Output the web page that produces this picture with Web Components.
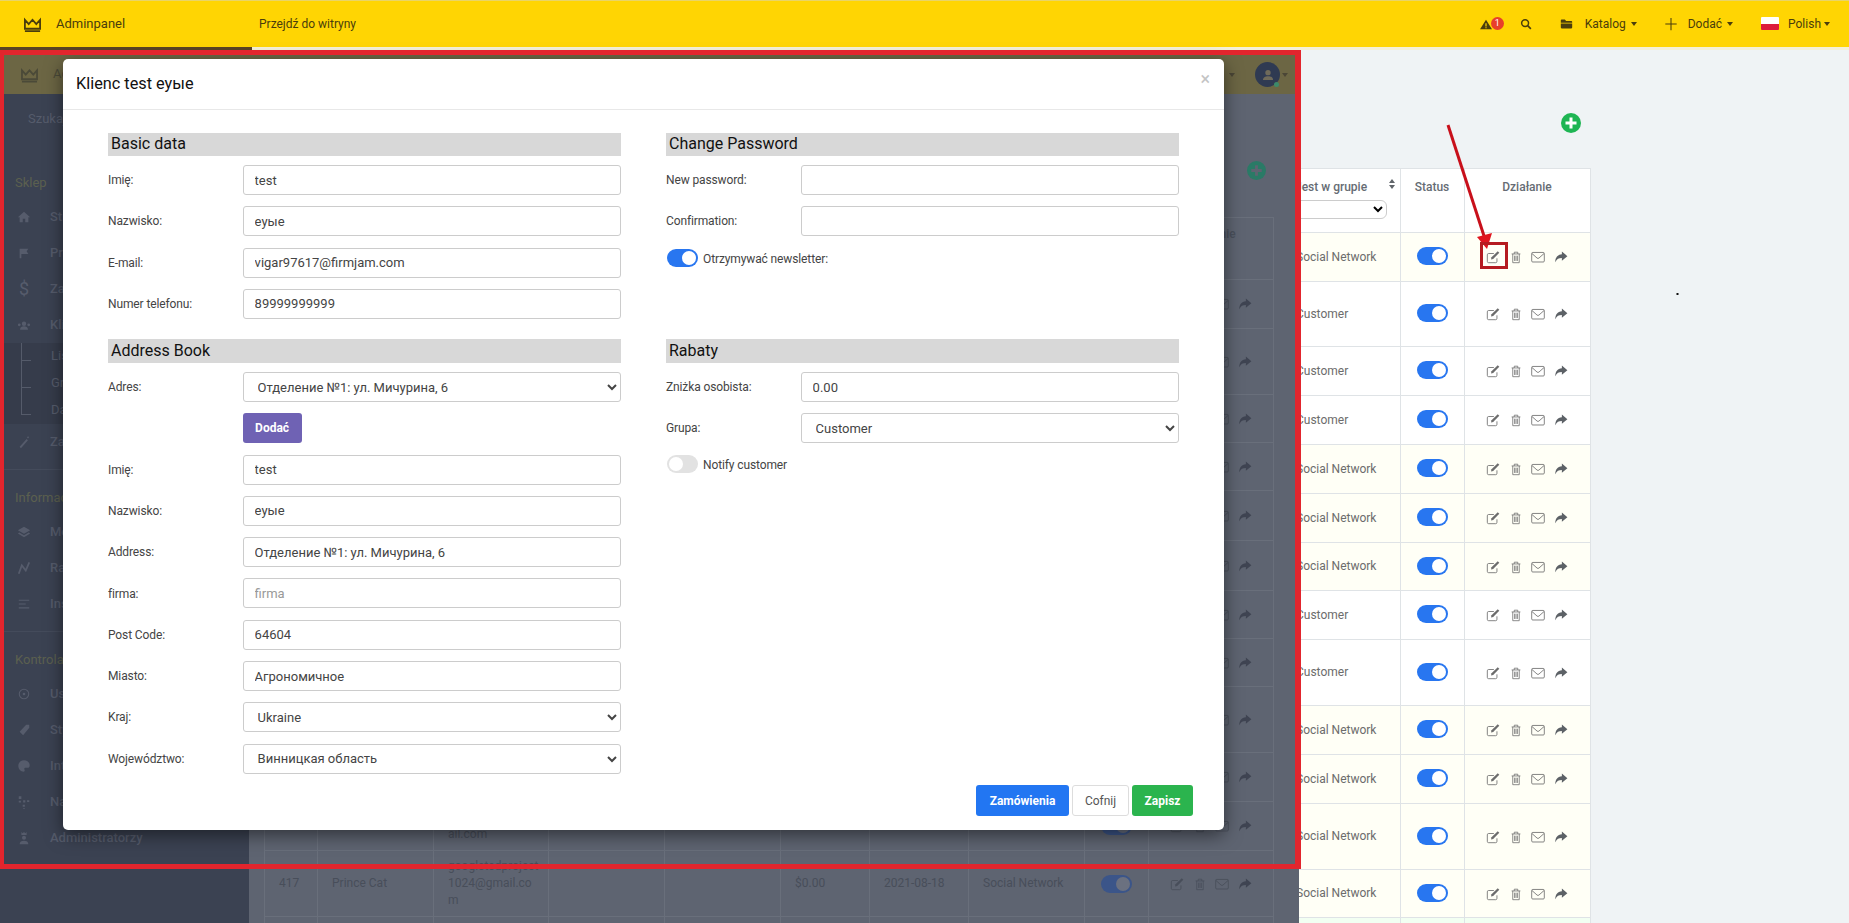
<!DOCTYPE html>
<html lang="pl">
<head>
<meta charset="utf-8">
<title>Adminpanel</title>
<style>
  html, body { margin: 0; height: 100%; overflow: hidden; }
  body { font: 12px/1.4 Roboto, "Noto Sans", sans-serif; background: #eff3f5; }
</style>
</head>
<body>
<admin-app></admin-app>

<script>
const ICONS = {
  crown: '<path d="M2 3.5 6 8l4-4.5L14 8l4-4.5V13H2Z M2 15.5h16" fill="none" stroke="currentColor" stroke-width="1.9"/>',
  search: '<circle cx="6.8" cy="6.8" r="4.6" fill="none" stroke="currentColor" stroke-width="2"/><path d="m10.2 10.2 4.3 4.3" stroke="currentColor" stroke-width="2.2"/>',
  folder: '<path d="M1 4a1 1 0 0 1 1-1h4l1.5 2H14a1 1 0 0 1 1 1v1H1Z M1 8h14v5a1 1 0 0 1-1 1H2a1 1 0 0 1-1-1Z" fill="currentColor"/>',
  plus: '<path d="M8 1v14M1.5 8h13" stroke="currentColor" stroke-width="1.2" fill="none"/>',
  edit: '<path d="M12.5 9.5V13a1.5 1.5 0 0 1-1.5 1.5H3A1.5 1.5 0 0 1 1.5 13V5.5A1.5 1.5 0 0 1 3 4h6" fill="none" stroke="currentColor" stroke-width=".95"/><path d="M13.4 1.4 15.2 3.2 8.2 10.2 5.7 10.8 6.3 8.4Z" fill="currentColor"/>',
  trash: '<path d="M3 4.5h10M6 4.5v-2h4v2M4.3 4.5v10h7.4v-10M6.4 6.5v6M8 6.5v6M9.6 6.5v6" fill="none" stroke="currentColor" stroke-width=".9"/>',
  mail: '<rect x=".8" y="2.800" width="14.400" height="10.900" rx="1.200" fill="none" stroke="currentColor" stroke-width=".95"/><path d="m1.100 4 5.800 5.200a1.700 1.700 0 0 0 2.200 0L14.900 4" fill="none" stroke="currentColor" stroke-width=".95"/>',
  share: '<path d="M9 1.8 15.3 7 9 12.2V9.2C5.5 9.2 3 10.2 1.5 14 1.3 9 4 5.2 9 4.9Z" fill="currentColor"/>',
  home: '<path d="M8 2 1 8.2h2V14h3.6v-4h2.8v4H13V8.2h2Z" fill="currentColor"/>',
  flag: '<path d="M3 3h10l-2 3 2 3H5v5H3Z" fill="currentColor"/>',
  users: '<path d="M8 4a2.5 2.5 0 1 1 0 5 2.5 2.5 0 0 1 0-5ZM3.5 13.5C3.5 10.5 5.5 9.5 8 9.5s4.5 1 4.5 4ZM2.6 6.2a1.6 1.6 0 1 1 0 3.2 1.6 1.6 0 0 1 0-3.2ZM13.4 6.2a1.6 1.6 0 1 1 0 3.2 1.6 1.6 0 0 1 0-3.2Z" fill="currentColor"/>',
  wand: '<path d="M3 13.5 11 4.5 12.5 6 4.5 15ZM12.6 1.5l1.2 1.2-1.2 1.2-1.2-1.2Z" fill="currentColor"/>',
  layers: '<path d="M8 2 15 6 8 10 1 6ZM2.6 8.7 8 11.8l5.4-3.1 1.6 1L8 14 1 9.7Z" fill="currentColor"/>',
  chart: '<path d="M2 14.5 5.5 5l4.5 6L14 1.5" fill="none" stroke="currentColor" stroke-width="2"/>',
  list: '<path d="M2 3h12v1.4H2ZM2 7.3h8v1.4H2ZM2 11.6h12V13H2Z" fill="currentColor"/>',
  gear: '<path fill-rule="evenodd" d="M8 2a6 6 0 1 0 0 12A6 6 0 0 0 8 2Zm0 1.2a4.8 4.8 0 1 1 0 9.6 4.8 4.8 0 0 1 0-9.6ZM8 6.5a1.5 1.5 0 1 0 0 3 1.5 1.5 0 0 0 0-3Z" fill="currentColor"/>',
  tag: '<path d="M10.5 2H14v3.5L7 14l-4-4Z" fill="currentColor"/>',
  palette: '<path d="M8 1.5C4 1.5 1.5 4.5 1.5 8S4.500 14.500 7.500 14.500C9 14.500 9 13 8.500 12S8.500 10 10 10h2c1.500 0 2.500-1 2.500-3C14.500 4 11.500 1.500 8 1.500Z" fill="currentColor"/>',
  sitemap: '<path d="M2 1.500h3v3H2ZM7 6h2.500v2.500H7ZM11.500 6h2.500v2H11.500ZM2 6.500h2.500v2H2ZM6.500 11H9v2.500H6.500ZM7 15h2v1H7Z" fill="currentColor"/>',
  admin: '<path d="M5 1l1.500 1.500L8 1l1.500 1.500L11 1v3.500H5ZM8 5.500a2.300 2.300 0 1 1 0 4.600 2.300 2.300 0 0 1 0-4.600ZM3 15c0-2.800 2-4 5-4s5 1.200 5 4Z" fill="currentColor"/>',
  user: '<path d="M8 3.500a2.400 2.400 0 1 1 0 4.800 2.400 2.400 0 0 1 0-4.800ZM3.500 12.500C3.500 10 5.500 9 8 9s4.500 1 4.500 3.500Z" fill="currentColor"/>'
};

class UiIcon extends HTMLElement {
  connectedCallback() {
    const vb = this.getAttribute('name') === 'crown' ? '0 0 20 17' : '0 0 16 16';
    this.attachShadow({ mode: 'open' }).innerHTML = `
      <style>
        :host { display: inline-flex; width: 13px; height: 13px; flex: none; }
        svg { width: 100%; height: 100%; display: block; }
      </style>
      <svg viewBox="${vb}" aria-hidden="true">${ICONS[this.getAttribute('name')] || ''}</svg>`;
  }
}

class ToggleSwitch extends HTMLElement {
  connectedCallback() {
    const on = this.hasAttribute('on');
    this.attachShadow({ mode: 'open' }).innerHTML = `
      <style>
        :host { display: inline-flex; flex: none; width: 31px; height: 18px; box-sizing: border-box; padding: 2px;
          border-radius: 9px; background: ${on ? 'var(--toggle-on, #2876f0)' : '#e2e2e2'};
          justify-content: ${on ? 'flex-end' : 'flex-start'}; }
        i { display: block; width: 14px; height: 14px; border-radius: 50%; background: var(--knob, #fff); }
      </style><i></i>`;
  }
}

class RowActions extends HTMLElement {
  connectedCallback() {
    this.attachShadow({ mode: 'open' }).innerHTML = `
      <style>
        :host { display: flex; justify-content: center; align-items: center; gap: 8.500px; }
        ui-icon { width: 14px; height: 14px; }
        ui-icon:last-child { color: var(--share, inherit); }
      </style>
      <ui-icon name="edit"></ui-icon><ui-icon name="trash"></ui-icon><ui-icon name="mail"></ui-icon><ui-icon name="share"></ui-icon>`;
  }
}

class AdminTopbar extends HTMLElement {
  connectedCallback() {
    this.attachShadow({ mode: 'open' }).innerHTML = `
      <style>
        :host { display: block; color: #4a3d0c; }
        .bar { height: 46px; border-top: 1px solid #e9d468; background: #ffd503; display: flex; align-items: center; }
        .brand { width: 252px; flex: none; box-sizing: border-box; padding-left: 23px; display: flex; align-items: center; gap: 14px; font-size: 13px; }
        .brand ui-icon { width: 19px; height: 17px; }
        .link { margin-left: 7px; }
        .right { margin-left: auto; padding-right: 19px; display: flex; align-items: center; }
        .caret { width: 0; height: 0; border: 3.500px solid transparent; border-top: 4px solid currentColor; border-bottom: 0; margin-left: 5px; }
        .alert { position: relative; width: 24px; height: 13px; margin-right: 16px; }
        .alert svg { width: 12px; height: 11px; display: block; margin-top: 2px; }
        .badge { position: absolute; left: 11px; top: 0; width: 13px; height: 13px; border-radius: 50%; background: #e8402a; color: #fff; font-size: 9px; line-height: 13px; text-align: center; }
        .search { width: 12px; height: 12px; margin-right: 28px; }
        .folder { margin-right: 12px; }
        .plus { width: 14px; height: 14px; margin: 0 10px 0 27px; }
        .flag { width: 18px; height: 13px; margin: 0 9px 0 28px; background: linear-gradient(#fff 50%, #dc1c3c 50%); border-radius: 1px; }
        .tight { margin-left: 3px; }
      </style>
      <div class="bar">
        <div class="brand"><ui-icon name="crown"></ui-icon>Adminpanel</div>
        <span class="link">Przejdź do witryny</span>
        <div class="right">
          <div class="alert">
            <svg viewBox="0 0 16 16" preserveAspectRatio="none"><path d="M8 1 16 15H0Z" fill="currentColor"/><path d="M7.200 6h1.600v5H7.200ZM7.200 12h1.600v1.500H7.200Z" fill="#ffd503"/></svg>
            <span class="badge">1</span>
          </div>
          <ui-icon class="search" name="search"></ui-icon>
          <ui-icon class="folder" name="folder"></ui-icon>Katalog<i class="caret"></i>
          <ui-icon class="plus" name="plus"></ui-icon>Dodać<i class="caret"></i>
          <div class="flag"></div>Polish<i class="caret tight"></i>
        </div>
      </div>`;
  }
}

class SideNav extends HTMLElement {
  connectedCallback() {
    const item = (icon, text) => `<div class="item"><ui-icon name="${icon}"></ui-icon><span>${text}</span></div>`;
    const title = t => `<div class="title">${t}</div>`;
    this.attachShadow({ mode: 'open' }).innerHTML = `
      <style>
        :host { display: block; width: 249px; flex: none; background: #3b4252; color: #565c6c; font-size: 13px; font-weight: 500; }
        .search { height: 61px; box-sizing: border-box; padding: 16px 0 0 28px; font-weight: 400; }
        .title { height: 44px; box-sizing: border-box; padding: 19px 0 0 15px; color: #5b604f; font-weight: 400; }
        .item { height: 36px; box-sizing: border-box; padding-left: 17px; display: flex; align-items: center; gap: 19px; }
        .item ui-icon { width: 14px; height: 14px; }
        .group { padding-bottom: 9px; border-bottom: 1px solid #444b5b; }
        .group:last-child { border: 0; }
        .sub { height: 81px; background: #363c4b; display: flex; font-weight: 400; }
        .tree { margin-left: 21px; width: 10px; }
        .tree i { display: block; box-sizing: border-box; height: 27px; border-left: 1px solid #555b6a; border-bottom: 1px solid #555b6a; }
        .tree i:first-child { height: 18px; }
        .labels { margin-left: 20px; }
        .labels div { height: 27px; line-height: 26px; }
      </style>
      <div class="search">Szukaj</div>
      <div class="group">
        ${title('Sklep')}
        ${item('home', 'Strona główna')}${item('flag', 'Produkty')}
        <div class="item"><span style="width:14px;text-align:center;font-size:18px;font-weight:400">$</span><span>Zamówienia</span></div>
        ${item('users', 'Klienci')}
        <div class="sub">
          <div class="tree"><i></i><i></i><i></i></div>
          <div class="labels"><div>Lista</div><div>Grupy</div><div>Dane</div></div>
        </div>
        ${item('wand', 'Zakupy')}
      </div>
      <div class="group">
        ${title('Informacje')}
        ${item('layers', 'Menu')}${item('chart', 'Raporty')}${item('list', 'Instrumenty')}
      </div>
      <div class="group">
        ${title('Kontrola')}
        ${item('gear', 'Ustawienia')}${item('tag', 'Style')}${item('palette', 'Interfejs')}${item('sitemap', 'Narzędzia')}${item('admin', 'Administratorzy')}
      </div>`;
  }
}

class DimTable extends HTMLElement {
  connectedCallback() {
    const heights = [49, 66, 48, 48, 50, 50, 48, 48, 66, 49, 49, 66, 60];
    const widths = [53, 116, 115, 116, 116, 89, 99, 116, 64, 125];
    const rows = heights.map((h, i) => {
      let id = '', name = '', mail = '', bal = '', date = '', grp = '';
      if (i === 10) mail = '&nbsp;<br>ail.com';
      if (i === 11) {
        id = '417'; name = 'Prince Cat'; mail = 'googletedproject<br>1024@gmail.co<br>m';
        bal = '$0.00'; date = '2021-08-18'; grp = 'Social Network';
      }
      return `<tr style="height:${h}px"><td>${id}</td><td>${name}</td><td>${mail}</td><td></td><td></td>
        <td>${bal}</td><td>${date}</td><td>${grp}</td>
        <td><div class="mid"><toggle-switch on></toggle-switch></div></td><td><row-actions></row-actions></td></tr>`;
    }).join('');
    this.attachShadow({ mode: 'open' }).innerHTML = `
      <style>
        :host { display: block; color: #484e5a; --toggle-on: #3b5589; --knob: #6b7180; --share: #3f4452; }
        table { border-collapse: collapse; table-layout: fixed; width: 1009px; }
        th, td { border: 1px solid #696f7b; padding: 0 14px; font-weight: 400; text-align: left; line-height: 17px; }
        th { height: 62px; vertical-align: top; padding-top: 8px; box-sizing: border-box; font-weight: 500; color: #4a505c; }
        th:last-child { text-align: center; }
        .mid { display: flex; justify-content: center; }
        td:nth-last-child(-n+2) { padding: 0; }
      </style>
      <table>
        <colgroup>${widths.map(w => `<col style="width:${w}px">`).join('')}</colgroup>
        <tr><th></th><th></th><th></th><th></th><th></th><th></th><th></th><th></th><th></th><th>Działanie</th></tr>
        ${rows}
      </table>`;
  }
}

class DimPage extends HTMLElement {
  connectedCallback() {
    this.attachShadow({ mode: 'open' }).innerHTML = `
      <style>
        :host { display: block; position: relative; width: 1299px; height: 873px; flex: none; background: #5e6471; font-size: 12px; }
        .top { margin-top: 5px; height: 39px; box-sizing: border-box; background: #6c6644; color: #4b4a38; display: flex; align-items: center; padding-left: 20px; font-size: 13px; }
        .top .crown { width: 19px; height: 16px; margin-right: 14px; }
        .user { margin-left: auto; padding-right: 11px; display: flex; align-items: center; }
        .caret { width: 0; height: 0; border: 3.500px solid transparent; border-top: 4px solid #4b4636; border-bottom: 0; margin-left: 2px; }
        .avatar { position: relative; width: 25px; height: 25px; border-radius: 50%; background: #2f3a52; color: #6f6a5a; margin-left: 20px; display: flex; align-items: center; justify-content: center; }
        .avatar ui-icon { width: 18px; height: 18px; }
        .avatar b { position: absolute; right: 1px; bottom: 0; width: 5px; height: 5px; border-radius: 50%; background: #3d8a6a; }
        .body { display: flex; height: 829px; overflow: hidden; }
        .main { flex: 1; min-width: 0; padding-left: 15px; }
        .add { display: flex; justify-content: flex-end; padding: 67px 33px 37px 0; }
        .add svg { width: 19px; height: 19px; display: block; }
      </style>
      <div class="top">
        <ui-icon class="crown" name="crown"></ui-icon>Adminpanel
        <div class="user"><i class="caret"></i><div class="avatar"><ui-icon name="user"></ui-icon><b></b></div><i class="caret"></i></div>
      </div>
      <div class="body">
        <side-nav></side-nav>
        <div class="main">
          <div class="add"><svg viewBox="0 0 20 20"><circle cx="10" cy="10" r="10" fill="#2a7a66"/><path d="M10 4.500v11M4.500 10h11" stroke="#5e6471" stroke-width="3"/></svg></div>
          <dim-table></dim-table>
        </div>
      </div>
      <customer-modal></customer-modal>
      <div style="position:absolute;left:0;top:0;width:1301px;height:819px;box-sizing:border-box;border:solid #e2252d;border-width:5px 6px 5px 4px;pointer-events:none;z-index:5"></div>`;
  }
}

class BrightTable extends HTMLElement {
  connectedCallback() {
    const S = 'Social Network', C = 'Customer';
    const rows = [[S, 49], [C, 65], [C, 49], [C, 49], [S, 49], [S, 49], [S, 48], [C, 49], [C, 66], [S, 49], [S, 49], [S, 66], [S, 48]];
    const body = rows.map(([g, h]) => `
      <tr class="${g === S ? 'social' : ''}" style="height:${h}px"><td>${g}</td>
        <td><div class="mid"><toggle-switch on></toggle-switch></div></td>
        <td><row-actions></row-actions></td></tr>`).join('');
    this.attachShadow({ mode: 'open' }).innerHTML = `
      <style>
        :host { display: block; color: #6c6c6c; margin-left: -20.500px; --share: #5c6166; }
        table { border-collapse: collapse; table-layout: fixed; width: 311px; background: #fff; }
        th, td { border: 1px solid #dfe3e6; padding: 0; font-weight: 400; }
        td:first-child { padding-left: 16.500px; }
        th { height: 64px; box-sizing: border-box; vertical-align: top; padding-top: 10px; font-weight: 500; color: #666c74; text-align: center; line-height: 17px; }
        th:first-child { text-align: left; padding-left: 15.500px; }
        .head { display: flex; justify-content: space-between; padding-right: 5px; }
        .sort { display: flex; flex-direction: column; gap: 2px; padding-top: 0; }
        .sort i { width: 0; height: 0; border: 3.500px solid transparent; }
        .sort i:first-child { border-bottom: 4px solid #5f6469; border-top: 0; }
        .sort i:last-child { border-top: 4px solid #5f6469; border-bottom: 0; }
        select { display: block; width: 92px; height: 19px; margin-top: 4px; border: 1px solid #ccc; border-radius: 6px; background: #fff; padding: 0; font: inherit; }
        .social td { background: #fffff6; }
        .green td { background: #f2fff2; }
        .mid { display: flex; justify-content: center; margin-top: -2px; }
      </style>
      <table>
        <colgroup><col style="width:121px"><col style="width:64px"><col style="width:126px"></colgroup>
        <tr><th><div class="head"><span>Jest w grupie</span><span class="sort"><i></i><i></i></span></div><select aria-label="Jest w grupie"></select></th><th>Status</th><th>Działanie</th></tr>
        ${body}
        <tr class="green" style="height:50px"><td></td><td></td><td></td></tr>
      </table>`;
  }
}

class BrightPage extends HTMLElement {
  connectedCallback() {
    this.attachShadow({ mode: 'open' }).innerHTML = `
      <style>
        :host { display: block; position: relative; flex: 1; min-width: 0; height: 873px; overflow: hidden; background: #eff3f5; }
        .wrap { width: 292px; }
        .add { display: flex; justify-content: flex-end; padding: 63px 10px 35px 0; }
        .add svg { width: 20px; height: 20px; display: block; }
        .notes { position: absolute; inset: 0; width: 100%; height: 100%; pointer-events: none; }
      </style>
      <div class="wrap">
        <div class="add"><svg viewBox="0 0 20 20"><circle cx="10" cy="10" r="10" fill="#1eb553"/><path d="M10 4.500v11M4.500 10h11" stroke="#fff" stroke-width="3"/></svg></div>
        <bright-table></bright-table>
      </div>
      <svg class="notes" viewBox="0 0 550 873" preserveAspectRatio="xMinYMin">
        <path d="M149 75 186 189" stroke="#c8101b" stroke-width="3" fill="none"/>
        <path d="M188 199 178 187 193 183Z" fill="#e0141f"/>
        <rect x="182.500" y="193.500" width="25" height="24" fill="none" stroke="#b51b20" stroke-width="3"/>
        <rect x="377.500" y="243" width="2" height="2" fill="#111"/>
      </svg>`;
  }
}

class SectionBar extends HTMLElement {
  connectedCallback() {
    this.attachShadow({ mode: 'open' }).innerHTML = `
      <style>
        :host { display: flex; align-items: center; height: 23px; box-sizing: border-box; padding-left: 3px; background: #d8d8d8; color: #111; font-size: 16px; }
      </style><slot></slot>`;
  }
}

class FormField extends HTMLElement {
  connectedCallback() {
    const label = this.getAttribute('label') || '';
    const value = this.getAttribute('value') || '';
    const ph = this.getAttribute('placeholder') || '';
    const control = this.hasAttribute('select')
      ? `<select aria-label="${label}"><option>${value}</option></select>`
      : `<input value="${value}" placeholder="${ph}" aria-label="${label}">`;
    this.attachShadow({ mode: 'open' }).innerHTML = `
      <style>
        :host { display: grid; grid-template-columns: 134.600px 1fr; align-items: center; color: #444; }
        span { letter-spacing: -.12px; padding-top: 1px; }
        input, select { box-sizing: border-box; width: 100%; height: 30px; border: 1px solid #ccc; border-radius: 3px; background: #fff; color: #444; font: 13px Roboto, sans-serif; }
        input { padding: 0 11px; }
        select { padding: 0 10px; }
        input::placeholder { color: #999; }
      </style>
      <span>${label}</span>${control}`;
  }
}

class ToggleRow extends HTMLElement {
  connectedCallback() {
    this.attachShadow({ mode: 'open' }).innerHTML = `
      <style>
        :host { display: flex; align-items: center; gap: 5px; padding-left: 1px; color: #444; letter-spacing: -.12px; }
        span { padding-top: 2px; }
      </style>
      <toggle-switch ${this.hasAttribute('on') ? 'on' : ''}></toggle-switch><span><slot></slot></span>`;
  }
}

class CustomerModal extends HTMLElement {
  connectedCallback() {
    this.attachShadow({ mode: 'open' }).innerHTML = `
      <style>
        :host { position: absolute; left: 63px; top: 9px; width: 1161px; height: 771px; z-index: 3; display: flex; flex-direction: column; box-sizing: border-box; background: #fff; border-radius: 5px; box-shadow: 0 5px 18px rgba(0,0,0,.5); color: #333; }
        header { height: 51px; flex: none; box-sizing: border-box; border-bottom: 1px solid #e8e8e8; display: flex; align-items: center; justify-content: space-between; padding: 0 14px 0 13px; }
        h2 { margin: 0; font-size: 16.300px; font-weight: 400; color: #111; padding-top: 1px; }
        .close { color: #c4c4c4; font-size: 18px; font-weight: 400; line-height: 1; align-self: flex-start; margin-top: 11px; }
        .body { flex: 1; padding: 23px 45px 0; display: grid; grid-template-columns: 1fr 1fr; column-gap: 45px; grid-template-rows: 186px auto; row-gap: 20px; align-content: start; }
        section { display: flex; flex-direction: column; gap: 11.300px; }
        section-bar { margin-bottom: -2.300px; }
        .tall { height: 24px; }
        .adds { padding-left: 134.600px; }
        .first { margin-top: 1.500px; }
        button { font: 700 12px Roboto, sans-serif; height: 30px; border-radius: 3px; border: 1px solid transparent; color: #fff; cursor: pointer; }
        .violet { width: 59px; background: #6f62b4; display: block; }
        footer { flex: none; display: flex; justify-content: flex-end; gap: 3px; padding: 0 31px 14px; }
        footer button { height: 31px; }
        .blue { width: 93px; background: #2276f2; }
        .plain { width: 57px; background: #fff; border-color: #ddd; color: #555; font-weight: 400; }
        .ok { width: 61px; background: #2bb44e; }
      </style>
      <header><h2>Klienc test еуые</h2><span class="close">×</span></header>
      <div class="body">
        <section>
          <section-bar>Basic data</section-bar>
          <form-field label="Imię:" value="test"></form-field>
          <form-field label="Nazwisko:" value="еуые"></form-field>
          <form-field label="E-mail:" value="vigar97617@firmjam.com"></form-field>
          <form-field label="Numer telefonu:" value="89999999999"></form-field>
        </section>
        <section>
          <section-bar>Change Password</section-bar>
          <form-field label="New password:"></form-field>
          <form-field label="Confirmation:"></form-field>
          <toggle-row class="first" on>Otrzymywać newsletter:</toggle-row>
        </section>
        <section>
          <section-bar class="tall">Address Book</section-bar>
          <form-field select label="Adres:" value="Отделение №1: ул. Мичурина, 6"></form-field>
          <div class="adds"><button class="violet">Dodać</button></div>
          <form-field label="Imię:" value="test"></form-field>
          <form-field label="Nazwisko:" value="еуые"></form-field>
          <form-field label="Address:" value="Отделение №1: ул. Мичурина, 6"></form-field>
          <form-field label="firma:" placeholder="firma"></form-field>
          <form-field label="Post Code:" value="64604"></form-field>
          <form-field label="Miasto:" value="Агрономичное"></form-field>
          <form-field select label="Kraj:" value="Ukraine"></form-field>
          <form-field select label="Województwo:" value="Винницкая область"></form-field>
        </section>
        <section>
          <section-bar class="tall">Rabaty</section-bar>
          <form-field label="Zniżka osobista:" value="0.00"></form-field>
          <form-field select label="Grupa:" value="Customer"></form-field>
          <toggle-row>Notify customer</toggle-row>
        </section>
      </div>
      <footer>
        <button class="blue">Zamówienia</button><button class="plain">Cofnij</button><button class="ok">Zapisz</button>
      </footer>`;
  }
}

class AdminApp extends HTMLElement {
  connectedCallback() {
    this.attachShadow({ mode: 'open' }).innerHTML = `
      <style>
        :host { display: block; width: 1849px; height: 923px; overflow: hidden; }
        .edge { display: flex; height: 3px; background: #f4f0d6; }
        .edge i { width: 252px; background: #5a4423; }
        .stage { display: flex; }
      </style>
      <admin-topbar></admin-topbar>
      <div class="edge"><i></i></div>
      <div class="stage"><dim-page></dim-page><bright-page></bright-page></div>`;
  }
}

customElements.define('ui-icon', UiIcon);
customElements.define('toggle-switch', ToggleSwitch);
customElements.define('row-actions', RowActions);
customElements.define('section-bar', SectionBar);
customElements.define('form-field', FormField);
customElements.define('toggle-row', ToggleRow);
customElements.define('admin-topbar', AdminTopbar);
customElements.define('side-nav', SideNav);
customElements.define('dim-table', DimTable);
customElements.define('customer-modal', CustomerModal);
customElements.define('dim-page', DimPage);
customElements.define('bright-table', BrightTable);
customElements.define('bright-page', BrightPage);
customElements.define('admin-app', AdminApp);
</script>
</body>
</html>
